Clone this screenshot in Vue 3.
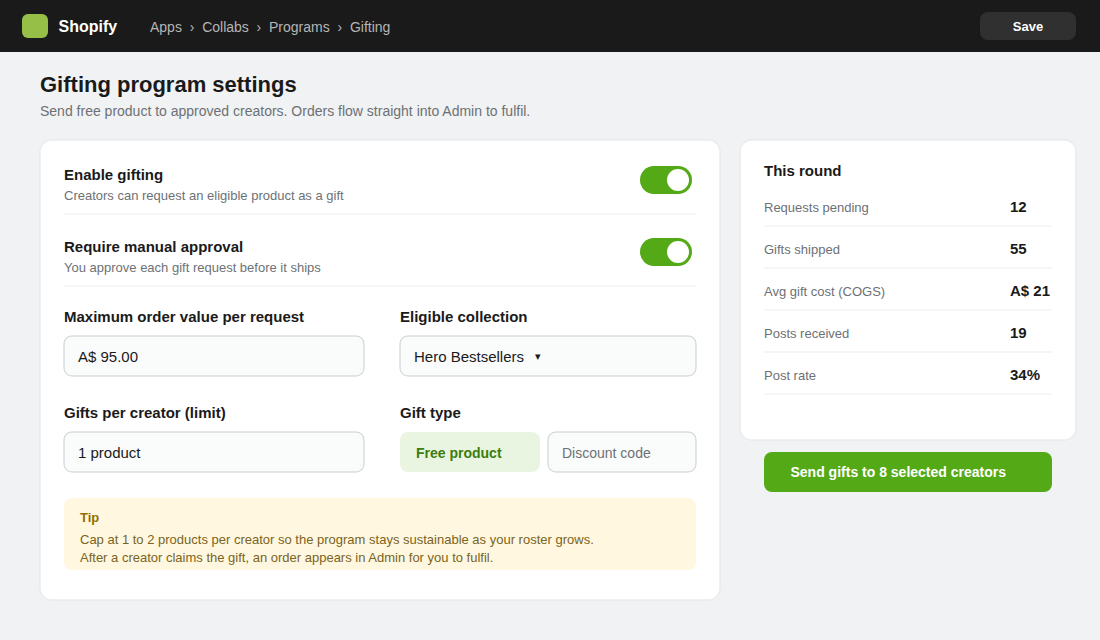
<template>
  <div class="page">
    <header class="topbar">
      <span class="logo"></span>
      <span class="brand">Shopify</span>
      <nav class="breadcrumb">
        <template v-for="(crumb, i) in crumbs" :key="crumb">
          <span v-if="i > 0" class="separator">›</span>
          <span>{{ crumb }}</span>
        </template>
      </nav>
      <button class="save-btn">Save</button>
    </header>

    <main class="content">
      <h1>Gifting program settings</h1>
      <p class="subtitle">Send free product to approved creators. Orders flow straight into Admin to fulfil.</p>

      <div class="columns">
        <section class="card settings">
          <div v-for="item in toggles" :key="item.title" class="toggle-row">
            <div>
              <h2>{{ item.title }}</h2>
              <p>{{ item.description }}</p>
            </div>
            <button
              class="toggle"
              :class="{ on: item.enabled }"
              role="switch"
              :aria-checked="item.enabled"
              @click="item.enabled = !item.enabled"
            >
              <span class="knob"></span>
            </button>
          </div>

          <div class="fields">
            <div class="field">
              <h2>Maximum order value per request</h2>
              <div class="control">A$ 95.00</div>
            </div>
            <div class="field">
              <h2>Eligible collection</h2>
              <div class="control">Hero Bestsellers <span class="caret">▾</span></div>
            </div>
            <div class="field">
              <h2>Gifts per creator (limit)</h2>
              <div class="control">1 product</div>
            </div>
            <div class="field">
              <h2>Gift type</h2>
              <div class="gift-types">
                <button
                  v-for="type in giftTypes"
                  :key="type"
                  class="gift-type"
                  :class="{ selected: type === giftType }"
                  @click="giftType = type"
                >
                  {{ type }}
                </button>
              </div>
            </div>
          </div>

          <div class="tip">
            <h3>Tip</h3>
            <p>Cap at 1 to 2 products per creator so the program stays sustainable as your roster grows.</p>
            <p>After a creator claims the gift, an order appears in Admin for you to fulfil.</p>
          </div>
        </section>

        <aside class="sidebar">
          <section class="card summary">
            <h2>This round</h2>
            <div v-for="stat in stats" :key="stat.label" class="stat">
              <span class="stat-label">{{ stat.label }}</span>
              <span class="stat-value">{{ stat.value }}</span>
            </div>
          </section>
          <button class="send-btn">Send gifts to 8 selected creators</button>
        </aside>
      </div>
    </main>
  </div>
</template>

<script setup>
import { ref } from 'vue'

const crumbs = ['Apps', 'Collabs', 'Programs', 'Gifting']

const toggles = ref([
  {
    title: 'Enable gifting',
    description: 'Creators can request an eligible product as a gift',
    enabled: true
  },
  {
    title: 'Require manual approval',
    description: 'You approve each gift request before it ships',
    enabled: true
  }
])

const giftTypes = ['Free product', 'Discount code']
const giftType = ref('Free product')

const stats = [
  { label: 'Requests pending', value: '12' },
  { label: 'Gifts shipped', value: '55' },
  { label: 'Avg gift cost (COGS)', value: 'A$ 21' },
  { label: 'Posts received', value: '19' },
  { label: 'Post rate', value: '34%' }
]
</script>

<style>
body {
  margin: 0;
  background: #f1f2f4;
}
</style>

<style scoped>
.page {
  min-height: 640px;
  background: #f1f2f4;
  color: #1a1a1a;
  font-family: "Liberation Sans", Arial, sans-serif;
}

h1,
h2,
h3,
p {
  margin: 0;
}

h2 {
  font-size: 15px;
  line-height: 17px;
}

button {
  border: none;
  padding: 0;
  font-family: inherit;
  cursor: pointer;
}

.topbar {
  display: flex;
  align-items: center;
  box-sizing: border-box;
  height: 52px;
  padding: 0 24px 0 22px;
  background: #1a1a1a;
}

.logo {
  width: 26px;
  height: 24px;
  border-radius: 6px;
  background: #95bf47;
}

.brand {
  width: 91.5px;
  margin-left: 10.5px;
  padding-top: 2px;
  color: #fff;
  font-size: 16px;
  font-weight: bold;
}

.breadcrumb {
  display: flex;
  gap: 7.78px;
  padding-top: 2px;
  color: #b5b5b5;
  font-size: 14px;
  line-height: 16px;
}

.save-btn {
  width: 96px;
  height: 28px;
  margin-left: auto;
  border-radius: 8px;
  background: #303030;
  color: #fff;
  font-size: 13px;
  font-weight: bold;
}

.content {
  padding: 20px 24px 0 40px;
}

h1 {
  font-size: 22px;
  line-height: 26px;
}

.subtitle {
  margin-top: 4px;
  color: #6d7175;
  font-size: 14px;
  line-height: 18px;
}

.columns {
  display: grid;
  grid-template-columns: 680px 336px;
  gap: 20px;
  align-items: start;
  margin-top: 20px;
}

.card {
  box-sizing: border-box;
  border-radius: 12px;
  background: #fff;
  box-shadow: 0 0 0 0.5px #e1e3e5, inset 0 0 0 0.5px #e1e3e5;
}

.settings {
  height: 460px;
  padding: 3px 24px 0;
}

.toggle-row {
  display: flex;
  justify-content: space-between;
  box-sizing: border-box;
  height: 72px;
  padding: 23px 4px 0 0;
  border-bottom: 2px solid #f6f6f7;
}

.toggle-row p {
  margin-top: 5px;
  color: #6d7175;
  font-size: 13px;
  line-height: 15px;
}

.toggle {
  display: flex;
  align-items: center;
  box-sizing: border-box;
  width: 52px;
  height: 28px;
  padding: 3px;
  border-radius: 14px;
  background: #c9cccf;
}

.toggle.on {
  justify-content: flex-end;
  background: #54aa16;
}

.knob {
  width: 22px;
  height: 22px;
  border-radius: 50%;
  background: #fff;
}

.fields {
  display: grid;
  grid-template-columns: 300px 296px;
  gap: 28px 36px;
  margin-top: 21px;
}

.field h2 {
  margin-bottom: 11px;
}

.control {
  box-sizing: border-box;
  height: 40px;
  padding: 12px 14px;
  border-radius: 8px;
  background: #fafbfb;
  box-shadow: 0 0 0 0.5px #c9cccf, inset 0 0 0 0.5px #c9cccf;
  font-size: 15px;
  line-height: 17px;
}

.caret {
  margin-left: 7px;
  font-size: 11px;
  line-height: 1;
  vertical-align: 2px;
}

.gift-types {
  display: grid;
  grid-template-columns: 140px 148px;
  gap: 8px;
}

.gift-type {
  height: 40px;
  padding: 2px 14px 0;
  border-radius: 8px;
  background: #fafbfb;
  box-shadow: 0 0 0 0.5px #c9cccf, inset 0 0 0 0.5px #c9cccf;
  color: #6d7175;
  font-size: 14px;
  text-align: left;
}

.gift-type.selected {
  padding-left: 16px;
  background: #eaf5e1;
  box-shadow: none;
  color: #3b7d0e;
  font-weight: bold;
}

.tip {
  box-sizing: border-box;
  height: 72px;
  margin-top: 26px;
  padding: 12px 16px 0;
  border-radius: 8px;
  background: #fff7e0;
  color: #7a6420;
  font-size: 13px;
  line-height: 15px;
}

.tip h3 {
  margin-bottom: 7px;
  color: #8f7000;
  font-size: 13px;
}

.tip p + p {
  margin-top: 3px;
}

.summary {
  height: 300px;
  padding: 22px 24px 0;
}

.summary h2 {
  margin-bottom: 6px;
}

.stat {
  display: grid;
  grid-template-columns: 246px 42px;
  align-items: baseline;
  box-sizing: border-box;
  height: 42px;
  padding-top: 13px;
  border-bottom: 2px solid #f6f6f7;
}

.stat-label {
  color: #6d7175;
  font-size: 13px;
}

.stat-value {
  font-size: 15px;
  font-weight: bold;
  line-height: 17px;
  white-space: nowrap;
}

.send-btn {
  display: block;
  width: 288px;
  height: 40px;
  margin: 12px 24px 0;
  padding-left: 26.5px;
  border-radius: 8px;
  background: #54aa16;
  color: #fff;
  font-size: 14px;
  font-weight: bold;
  text-align: left;
}
</style>
